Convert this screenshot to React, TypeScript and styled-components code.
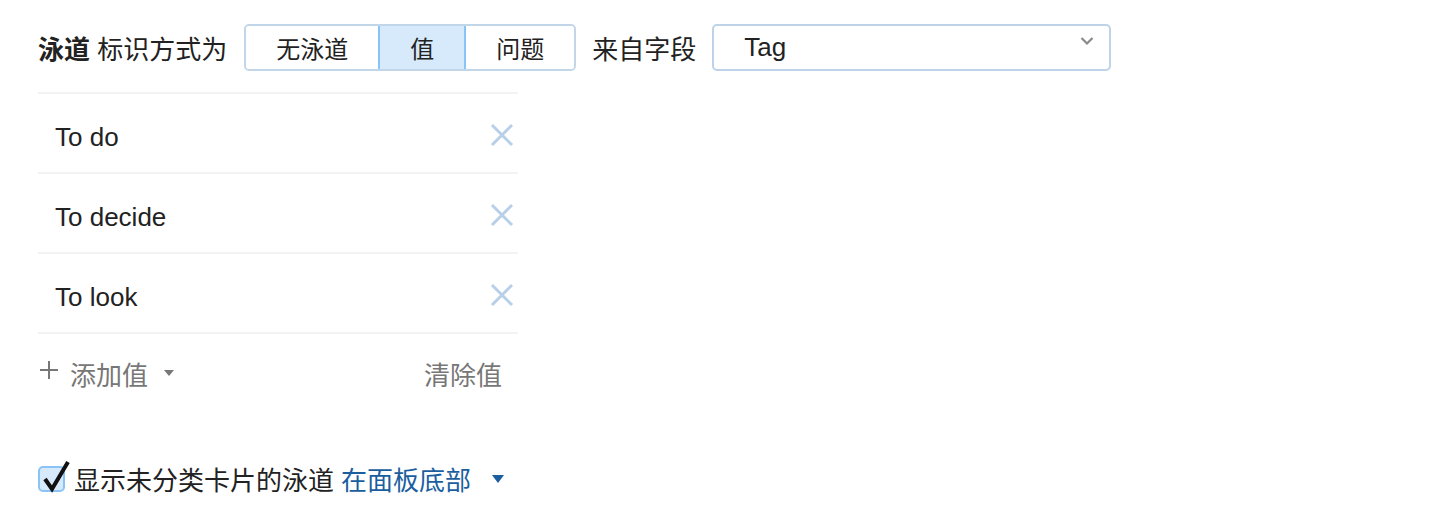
import React from "react";
import styled, { createGlobalStyle } from "styled-components";

const Global = createGlobalStyle`
  html, body { margin: 0; padding: 0; background: #fff; }
  body { font-family: "Liberation Sans", "Noto Sans CJK SC", sans-serif; color: #222; }
`;

const Page = styled.div`
  padding: 24px 0 0 38px;
  display: flex;
  flex-direction: column;
`;

const TopRow = styled.div`
  display: flex;
  align-items: center;
  height: 47px;
`;

const Label = styled.span`
  font-size: 26px;
  margin-right: 17px;
  b { font-weight: 700; }
`;

const Segmented = styled.div`
  display: flex;
  flex-shrink: 0;
  height: 47px;
  box-sizing: border-box;
  border: 2px solid #c2d6ea;
  border-radius: 5px;
  overflow: hidden;
`;

const Seg = styled.button<{ $active?: boolean; $w: number }>`
  flex: 0 0 ${(p) => p.$w}px;
  width: ${(p) => p.$w}px;
  margin: ${(p) => (p.$active ? "-2px 0" : "0")};
  height: ${(p) => (p.$active ? "47px" : "43px")};
  box-sizing: border-box;
  border: ${(p) => (p.$active ? "2px solid #8ac4f6" : "none")};
  background: ${(p) => (p.$active ? "#d6eafc" : "#fff")};
  font-family: inherit;
  font-size: 24px;
  color: #222;
  padding: 0;
  cursor: pointer;
`;

const FieldLabel = styled.span`
  font-size: 26px;
  margin: 0 16px 0 16px;
`;

const Select = styled.div`
  position: relative;
  flex-shrink: 0;
  width: 399px;
  height: 47px;
  box-sizing: border-box;
  border: 2px solid #bfd3e8;
  border-radius: 5px;
  display: flex;
  align-items: center;
  padding-left: 30px;
  font-size: 26px;
  color: #222;
`;

const Chevron = styled.svg`
  position: absolute;
  right: 15px;
  top: 10px;
`;

const List = styled.div`
  width: 480px;
  margin-top: 21px;
  border-top: 2px solid #f3f3f3;
`;

const Row = styled.div`
  height: 78px;
  display: flex;
  align-items: center;
  justify-content: space-between;
  padding: 0 4px 0 17px;
  border-bottom: 2px solid #f3f3f3;
  font-size: 26px;
  color: #222;
`;

const RowText = styled.span`
  padding-top: 8px;
`;

const XWrap = styled.span`
  display: flex;
  padding-top: 3px;
`;

const Footer = styled.div`
  width: 480px;
  height: 78px;
  display: flex;
  align-items: center;
  justify-content: space-between;
  font-size: 26px;
  color: #777;
`;

const AddBtn = styled.div`
  display: flex;
  align-items: center;
  padding-left: 2px;
`;

const Plus = styled.svg`
  margin-right: 12px;
  margin-top: -6px;
`;

const Caret = styled.span<{ $color: string; $w: number; $h: number; $gap: number }>`
  display: inline-block;
  width: 0;
  height: 0;
  margin-left: ${(p) => p.$gap}px;
  border-left: ${(p) => p.$w / 2}px solid transparent;
  border-right: ${(p) => p.$w / 2}px solid transparent;
  border-top: ${(p) => p.$h}px solid ${(p) => p.$color};
`;

const Clear = styled.span`
  margin-right: 16px;
`;

const CheckRow = styled.label`
  display: flex;
  align-items: center;
  margin-top: 48px;
  font-size: 26px;
  color: #222;
`;

const Box = styled.span`
  position: relative;
  width: 27px;
  height: 26px;
  box-sizing: border-box;
  border: 2px solid #8ac4f6;
  background: #d6eafc;
  border-radius: 5px;
  margin-right: 9px;
`;

const Tick = styled.svg`
  position: absolute;
  left: 1px;
  top: -9px;
`;

const Link = styled.span`
  color: #1b5e9f;
  margin-left: 7px;
`;

const XIcon = () => (
  <svg width="24" height="24" viewBox="0 0 24 24">
    <path d="M2 2 L22 22 M22 2 L2 22" stroke="#b8d0e7" strokeWidth="3" />
  </svg>
);

const values = ["To do", "To decide", "To look"];

export default function App() {
  return (
    <>
      <Global />
      <Page>
        <TopRow>
          <Label>
            <b>泳道</b> 标识方式为
          </Label>
          <Segmented>
            <Seg $w={132}>无泳道</Seg>
            <Seg $w={88} $active>值</Seg>
            <Seg $w={108}>问题</Seg>
          </Segmented>
          <FieldLabel>来自字段</FieldLabel>
          <Select>
            Tag
            <Chevron width="14" height="10" viewBox="0 0 14 10">
              <path d="M1.5 2 L7 7.5 L12.5 2" fill="none" stroke="#8a8a8a" strokeWidth="2.2" />
            </Chevron>
          </Select>
        </TopRow>
        <List>
          {values.map((v) => (
            <Row key={v}>
              <RowText>{v}</RowText>
              <XWrap>
                <XIcon />
              </XWrap>
            </Row>
          ))}
        </List>
        <Footer>
          <AddBtn>
            <Plus width="18" height="18" viewBox="0 0 18 18">
              <path d="M9 0 V18 M0 9 H18" stroke="#777" strokeWidth="2" />
            </Plus>
            添加值
            <Caret $color="#777" $w={10} $h={6} $gap={16} />
          </AddBtn>
          <Clear>清除值</Clear>
        </Footer>
        <CheckRow>
          <Box>
            <Tick width="30" height="34" viewBox="0 0 30 34">
              <path d="M4 20 L11 30 L27 3" fill="none" stroke="#111" strokeWidth="4" />
            </Tick>
          </Box>
          显示未分类卡片的泳道
          <Link>在面板底部</Link>
          <Caret $color="#1b5e9f" $w={12} $h={8} $gap={21} />
        </CheckRow>
      </Page>
    </>
  );
}
